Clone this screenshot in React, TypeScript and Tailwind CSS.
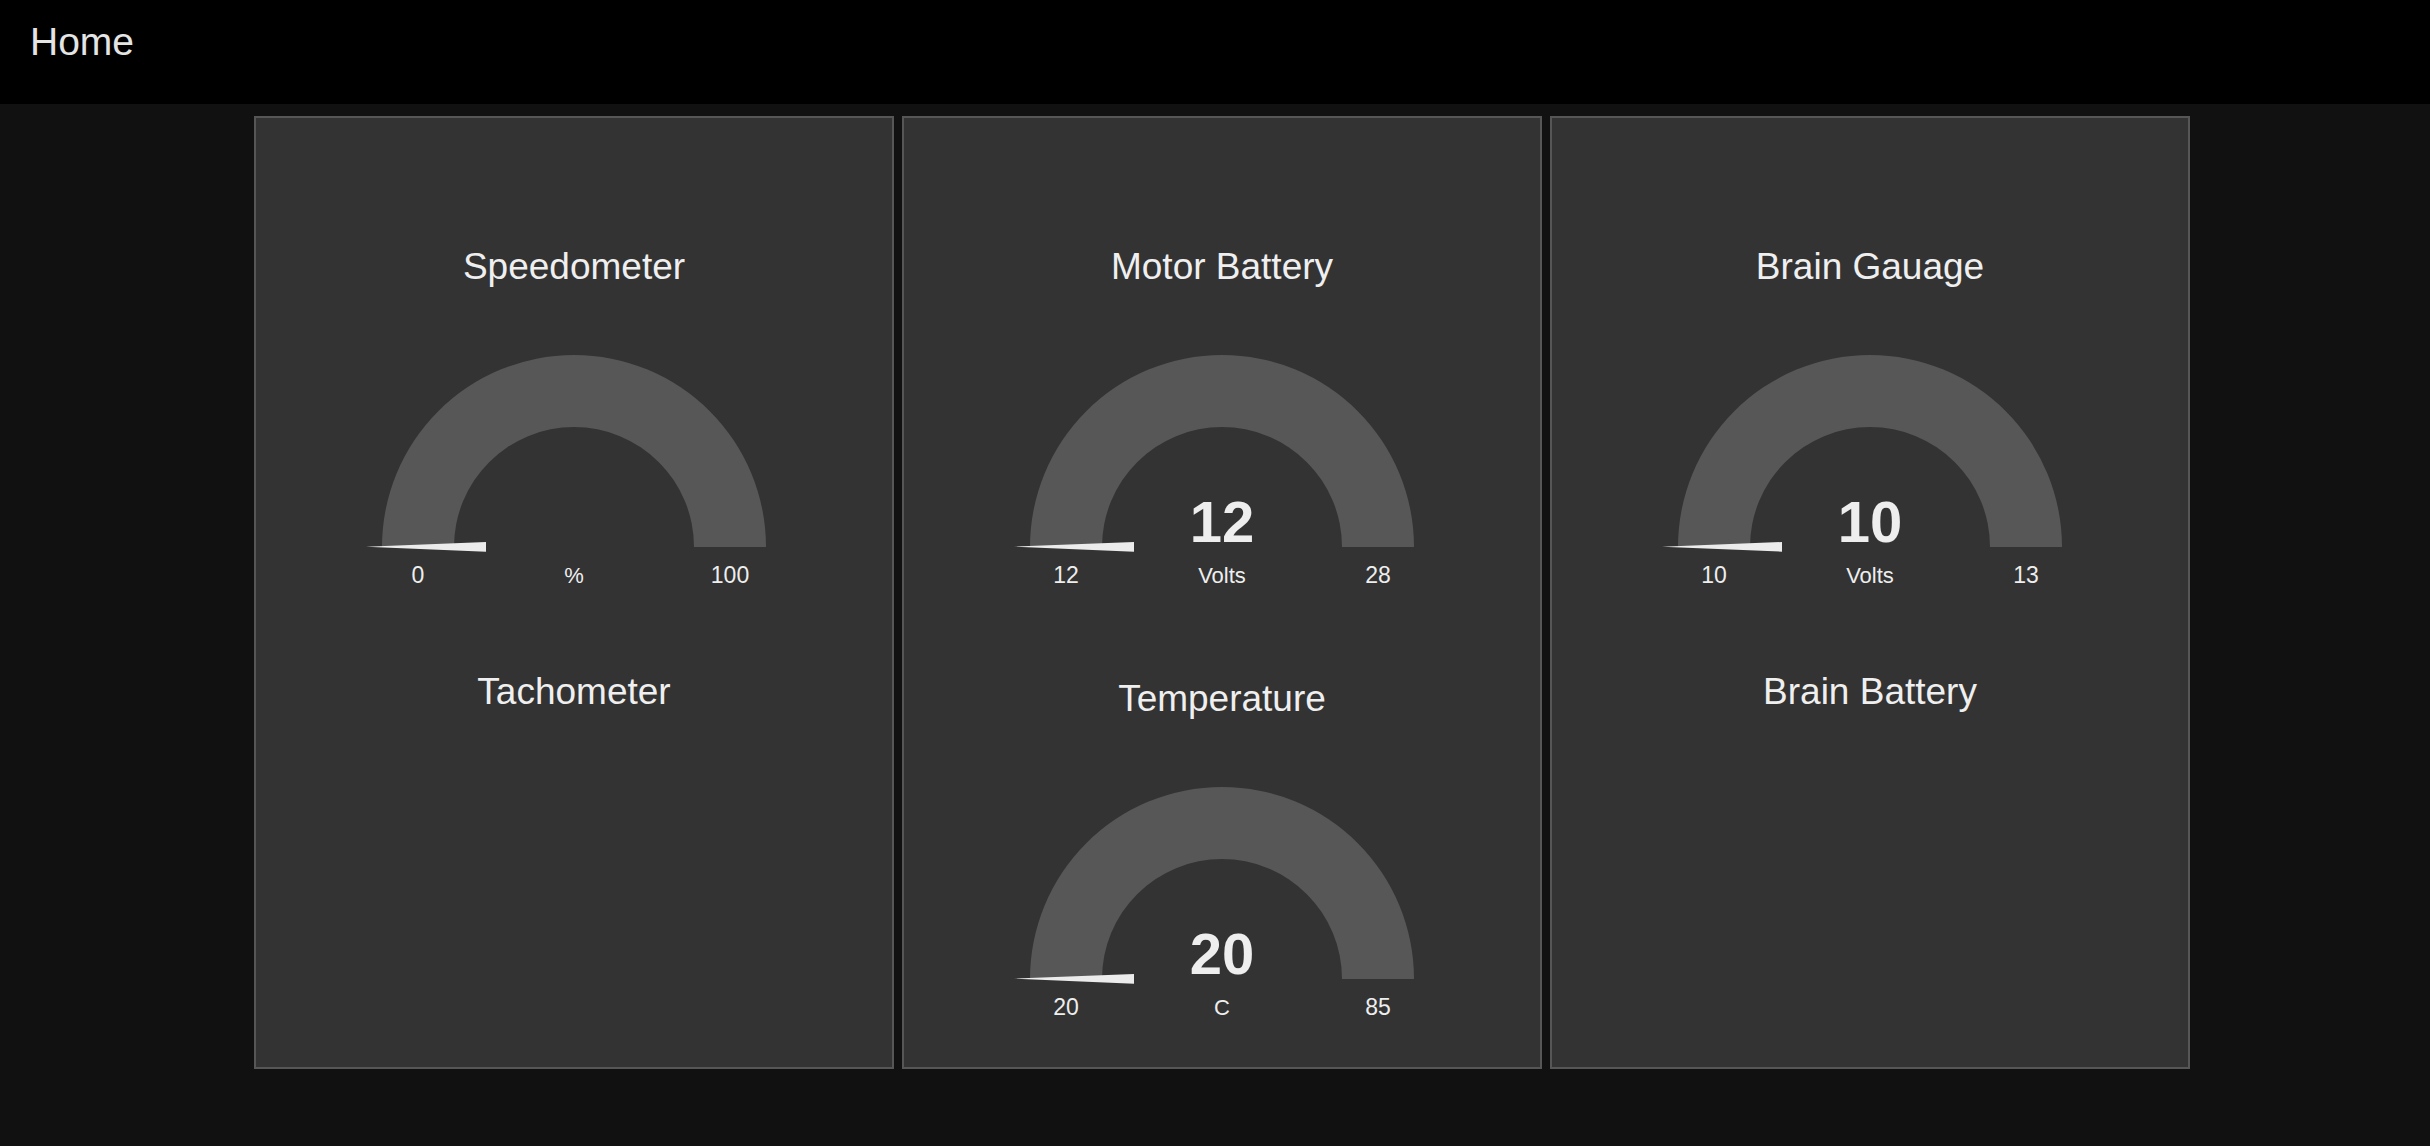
import React from "react";

const CX = 318;
const CY = 258;
const RO = 192;
const RI = 120;

const arcPath = `M ${CX - RO} ${CY} A ${RO} ${RO} 0 0 1 ${CX + RO} ${CY} L ${CX + RI} ${CY} A ${RI} ${RI} 0 0 0 ${CX - RI} ${CY} Z`;

type GaugeProps = { min: string; max: string; unit: string; value?: string };

function Gauge({ min, max, unit, value }: GaugeProps) {
  return (
    <svg width={636} height={310} viewBox="0 0 636 310" className="block">
      <path d={arcPath} fill="#575757" />
      <polygon points="110,257.7 230,253 230,262.7" fill="#ececec" />
      {value ? (
        <text x={CX} y={253} textAnchor="middle" fontSize={58} fontWeight="bold" fill="#eeeeee">
          {value}
        </text>
      ) : null}
      <text x={CX - 156} y={294} textAnchor="middle" fontSize={23} fill="#eeeeee">
        {min}
      </text>
      <text x={CX} y={294} textAnchor="middle" fontSize={22} fill="#eeeeee">
        {unit}
      </text>
      <text x={CX + 156} y={294} textAnchor="middle" fontSize={23} fill="#eeeeee">
        {max}
      </text>
    </svg>
  );
}

function Title({ children }: { children: React.ReactNode }) {
  return <div className="h-[44px] text-center text-[37px] leading-[44px] text-[#efefef]">{children}</div>;
}

function Card({ children }: { children: React.ReactNode }) {
  return (
    <div className="flex h-[953px] w-[640px] flex-col border-2 border-[#565656] bg-[#333333] pt-[127px]">
      {children}
    </div>
  );
}

export default function App() {
  return (
    <div className="min-h-screen bg-[#111111] font-['Liberation_Sans',Arial,sans-serif]">
      <header className="h-[104px] bg-black pl-[30px] pt-[20px]">
        <div className="text-[39px] leading-[44px] text-[#e4e4e4]">Home</div>
      </header>
      <main className="flex gap-2 pl-[254px] pt-3">
        <Card>
          <Title>Speedometer</Title>
          <Gauge min="0" max="100" unit="%" />
          <div className="mt-[71px]">
            <Title>Tachometer</Title>
          </div>
        </Card>
        <Card>
          <Title>Motor Battery</Title>
          <Gauge min="12" max="28" unit="Volts" value="12" />
          <div className="mt-[78px]">
            <Title>Temperature</Title>
          </div>
          <Gauge min="20" max="85" unit="C" value="20" />
        </Card>
        <Card>
          <Title>Brain Gauage</Title>
          <Gauge min="10" max="13" unit="Volts" value="10" />
          <div className="mt-[71px]">
            <Title>Brain Battery</Title>
          </div>
        </Card>
      </main>
    </div>
  );
}
